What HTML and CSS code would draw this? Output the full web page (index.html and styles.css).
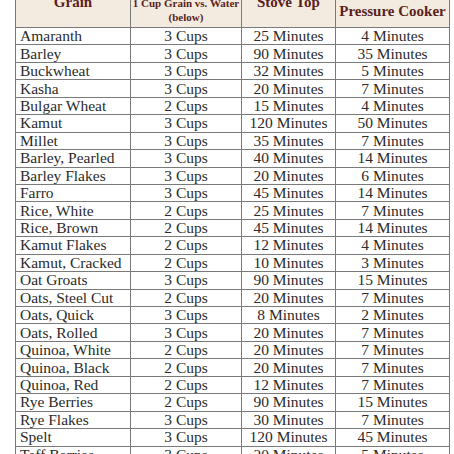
FILE: index.html
```html
<!DOCTYPE html>
<html>
<head>
<meta charset="utf-8">
<link rel="stylesheet" href="styles.css">
</head>
<body>
<div class="page">
<table class="grains">
<thead>
<tr>
<th class="h-grain">Grain</th>
<th class="h-water"><span class="small">1 Cup Grain vs. Water</span><br><span class="small">(below)</span></th>
<th class="h-stove">Stove Top</th>
<th class="h-pc">Pressure Cooker</th>
</tr>
</thead>
<tbody>
<tr><td>Amaranth</td><td>3 Cups</td><td>25 Minutes</td><td>4 Minutes</td></tr>
<tr><td>Barley</td><td>3 Cups</td><td>90 Minutes</td><td>35 Minutes</td></tr>
<tr><td>Buckwheat</td><td>3 Cups</td><td>32 Minutes</td><td>5 Minutes</td></tr>
<tr><td>Kasha</td><td>3 Cups</td><td>20 Minutes</td><td>7 Minutes</td></tr>
<tr><td>Bulgar Wheat</td><td>2 Cups</td><td>15 Minutes</td><td>4 Minutes</td></tr>
<tr><td>Kamut</td><td>3 Cups</td><td>120 Minutes</td><td>50 Minutes</td></tr>
<tr><td>Millet</td><td>3 Cups</td><td>35 Minutes</td><td>7 Minutes</td></tr>
<tr><td>Barley, Pearled</td><td>3 Cups</td><td>40 Minutes</td><td>14 Minutes</td></tr>
<tr><td>Barley Flakes</td><td>3 Cups</td><td>20 Minutes</td><td>6 Minutes</td></tr>
<tr><td>Farro</td><td>3 Cups</td><td>45 Minutes</td><td>14 Minutes</td></tr>
<tr><td>Rice, White</td><td>2 Cups</td><td>25 Minutes</td><td>7 Minutes</td></tr>
<tr><td>Rice, Brown</td><td>2 Cups</td><td>45 Minutes</td><td>14 Minutes</td></tr>
<tr><td>Kamut Flakes</td><td>2 Cups</td><td>12 Minutes</td><td>4 Minutes</td></tr>
<tr><td>Kamut, Cracked</td><td>2 Cups</td><td>10 Minutes</td><td>3 Minutes</td></tr>
<tr><td>Oat Groats</td><td>3 Cups</td><td>90 Minutes</td><td>15 Minutes</td></tr>
<tr><td>Oats, Steel Cut</td><td>2 Cups</td><td>20 Minutes</td><td>7 Minutes</td></tr>
<tr><td>Oats, Quick</td><td>3 Cups</td><td>8 Minutes</td><td>2 Minutes</td></tr>
<tr><td>Oats, Rolled</td><td>3 Cups</td><td>20 Minutes</td><td>7 Minutes</td></tr>
<tr><td>Quinoa, White</td><td>2 Cups</td><td>20 Minutes</td><td>7 Minutes</td></tr>
<tr><td>Quinoa, Black</td><td>2 Cups</td><td>20 Minutes</td><td>7 Minutes</td></tr>
<tr><td>Quinoa, Red</td><td>2 Cups</td><td>12 Minutes</td><td>7 Minutes</td></tr>
<tr><td>Rye Berries</td><td>2 Cups</td><td>90 Minutes</td><td>15 Minutes</td></tr>
<tr><td>Rye Flakes</td><td>3 Cups</td><td>30 Minutes</td><td>7 Minutes</td></tr>
<tr><td>Spelt</td><td>3 Cups</td><td>120 Minutes</td><td>45 Minutes</td></tr>
<tr><td>Teff Berries</td><td>3 Cups</td><td>20 Minutes</td><td>5 Minutes</td></tr>
</tbody>
</table>
</div>
</body>
</html>
```
FILE: styles.css
```css
html, body {
  margin: 0;
  padding: 0;
  background: #ffffff;
}
.page {
  width: 454px;
  height: 454px;
  overflow: hidden;
  padding-left: 15px;
  box-sizing: border-box;
}
.grains {
  border-collapse: collapse;
  table-layout: fixed;
  width: 435px;
  margin-top: -12px;
  font-family: "Liberation Serif", "DejaVu Serif", serif;
  font-size: 15.5px;
  color: #2b2b2b;
}
.grains th {
  background: #f3ebdf;
  color: #5a1f1c;
  font-weight: bold;
  height: 39px;
  box-sizing: border-box;
  border: 1px solid #7a7a7a;
  padding: 0;
  text-align: center;
  line-height: 14px;
}
.h-grain { width: 115px; vertical-align: top; padding-top: 6px !important; font-size: 15px; }
.h-water { width: 111px; vertical-align: top; padding-top: 6px !important; }
.h-stove { width: 94px; vertical-align: top; padding-top: 6px !important; font-size: 15px; }
.h-pc { vertical-align: middle; font-size: 15px; padding-top: 6px !important; }
.small {
  font-size: 11px;
  line-height: 12px;
}
.grains td {
  height: 16.45px;
  padding: 0;
  line-height: 16px;
  border: 1px solid #7a7a7a;
  text-align: center;
  white-space: nowrap;
}
.grains td:first-child {
  text-align: left;
  padding-left: 4px;
}
```
